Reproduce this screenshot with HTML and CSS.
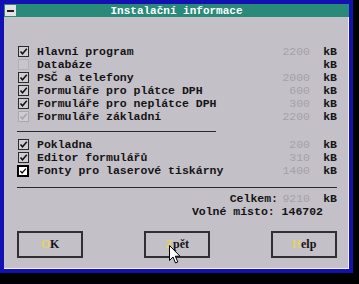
FILE: index.html
```html
<!DOCTYPE html>
<html>
  <head>
    <title>Instalační informace</title>
    <link rel="stylesheet" href="styles.css">
  </head>
  <body>
    <div class="window">
      <div class="titlebar">
        <div class="sysmenu"><span></span></div>
        <div class="title">Instalační informace</div>
      </div>
      <div class="content">

        <div class="group first">
          <div class="row">
            <span class="check on"><svg viewBox="0 0 9 9"><path d="M1.5 4.5 L3.5 6.8 L7.8 1.8"/></svg></span>
            <span class="label">Hlavní program</span><span class="num">2200</span><span class="unit">kB</span>
          </div>
          <div class="row">
            <span class="check off"></span>
            <span class="label">Databáze</span><span class="num"></span><span class="unit">kB</span>
          </div>
          <div class="row">
            <span class="check on"><svg viewBox="0 0 9 9"><path d="M1.5 4.5 L3.5 6.8 L7.8 1.8"/></svg></span>
            <span class="label">PSČ a telefony</span><span class="num">2000</span><span class="unit">kB</span>
          </div>
          <div class="row">
            <span class="check on"><svg viewBox="0 0 9 9"><path d="M1.5 4.5 L3.5 6.8 L7.8 1.8"/></svg></span>
            <span class="label">Formuláře pro plátce DPH</span><span class="num">600</span><span class="unit">kB</span>
          </div>
          <div class="row">
            <span class="check on"><svg viewBox="0 0 9 9"><path d="M1.5 4.5 L3.5 6.8 L7.8 1.8"/></svg></span>
            <span class="label">Formuláře pro neplátce DPH</span><span class="num">300</span><span class="unit">kB</span>
          </div>
          <div class="row">
            <span class="check dim"><svg viewBox="0 0 9 9"><path d="M1.5 4.5 L3.5 6.8 L7.8 1.8"/></svg></span>
            <span class="label">Formuláře základní</span><span class="num">2200</span><span class="unit">kB</span>
          </div>
        </div>

        <hr class="rule short">

        <div class="group">
          <div class="row">
            <span class="check on"><svg viewBox="0 0 9 9"><path d="M1.5 4.5 L3.5 6.8 L7.8 1.8"/></svg></span>
            <span class="label">Pokladna</span><span class="num">200</span><span class="unit">kB</span>
          </div>
          <div class="row">
            <span class="check on"><svg viewBox="0 0 9 9"><path d="M1.5 4.5 L3.5 6.8 L7.8 1.8"/></svg></span>
            <span class="label">Editor formulářů</span><span class="num">310</span><span class="unit">kB</span>
          </div>
          <div class="row">
            <span class="check focus"><svg viewBox="0 0 9 9"><path d="M1.5 4.5 L3.5 6.8 L7.8 1.8"/></svg></span>
            <span class="label">Fonty pro laserové tiskárny</span><span class="num">1400</span><span class="unit">kB</span>
          </div>
        </div>

        <hr class="rule">

        <div class="totals">
          <div class="row">
            <span></span>
            <span class="label right">Celkem:</span><span class="num">9210</span><span class="unit">kB</span>
          </div>
          <div class="free">Volné místo: 146702</div>
        </div>

        <div class="buttons">
          <div class="btn"><span class="key">O</span>K</div>
          <div class="btn"><span class="key">Z</span>pět</div>
          <div class="btn"><span class="key">H</span>elp</div>
        </div>

        <svg class="cursor" viewBox="0 0 12 19" width="12" height="19">
          <path d="M0.5 0.5 L0.5 15.5 L4 12 L6.5 18 L8.8 17 L6.3 11.2 L11 11.2 Z"/>
        </svg>
      </div>
    </div>
  </body>
</html>
```

FILE: styles.css
```css
body {
  margin: 0;
  background-color: #000;
  width: 359px;
  height: 284px;
  overflow: hidden;
}

.window {
  width: 345px;
  height: 265px;
  border: 4px solid #1212b4;
  display: flex;
  flex-direction: column;
}

.titlebar {
  height: 13px;
  background-color: #2a8a7a;
  display: flex;
  align-items: center;
  position: relative;
}

.sysmenu {
  width: 11px;
  height: 11px;
  margin-left: 1px;
  background-color: #e4e2e6;
  display: flex;
  align-items: center;
  justify-content: center;
}
.sysmenu span {
  width: 7px;
  height: 2px;
  background-color: #202020;
}

.title {
  flex: 1;
  text-align: center;
  color: #fff;
  font-family: "Liberation Mono", monospace;
  font-weight: bold;
  font-size: 11px;
  margin-right: 12px;
}

.content {
  flex: 1;
  background-color: #c4c0c8;
  border-right: 1px solid #f4f4f4;
  border-bottom: 1px solid #f4f4f4;
  padding: 0 11px 0 13px;
  font-family: "Liberation Mono", monospace;
  font-weight: bold;
  font-size: 11.5px;
  color: #141414;
  position: relative;
}

.group.first {
  margin-top: 28px;
}

.row {
  display: grid;
  grid-template-columns: 20px 1fr 28px 27px;
  align-items: center;
  height: 13px;
}

.label.right {
  text-align: right;
  padding-right: 4px;
}

.num {
  text-align: right;
  color: #a3a0a8;
  font-weight: normal;
}

.unit {
  text-align: right;
}

.check {
  width: 9px;
  height: 9px;
  margin-left: 1px;
  border: 1px solid #2a2a2e;
  background-color: #cfcdd2;
  display: flex;
}
.check svg {
  width: 9px;
  height: 9px;
  fill: none;
  stroke: #101010;
  stroke-width: 1.5;
}
.check.off {
  border-color: #b2afb6;
  background-color: #c8c6cc;
}
.check.dim {
  border-color: #aaa7ae;
}
.check.dim svg {
  stroke: #a6a3aa;
}
.check.focus {
  width: 8px;
  height: 8px;
  border: 2px solid #000;
  background-color: #fff;
  margin-left: 0;
}
.check.focus svg {
  width: 8px;
  height: 8px;
}

.rule {
  border: 0;
  border-top: 1px solid #2a2a2e;
  margin: 8px 0 6px 0;
  height: 0;
}
.rule.short {
  width: 199px;
}
.rule:not(.short) {
  margin: 10px 0 4px 0;
}

.free {
  text-align: right;
  padding-right: 14px;
  height: 14px;
  line-height: 14px;
}

.buttons {
  display: flex;
  justify-content: space-between;
  margin-top: 12px;
}

.btn {
  width: 62px;
  height: 23px;
  border: 2px solid #303034;
  display: flex;
  align-items: center;
  justify-content: center;
  font-family: "Liberation Serif", serif;
  font-weight: bold;
  font-size: 12px;
}
.key {
  color: #e2d26a;
}

.cursor {
  position: absolute;
  left: 165px;
  bottom: 4px;
  fill: #fff;
  stroke: #000;
  stroke-width: 1;
}
```
